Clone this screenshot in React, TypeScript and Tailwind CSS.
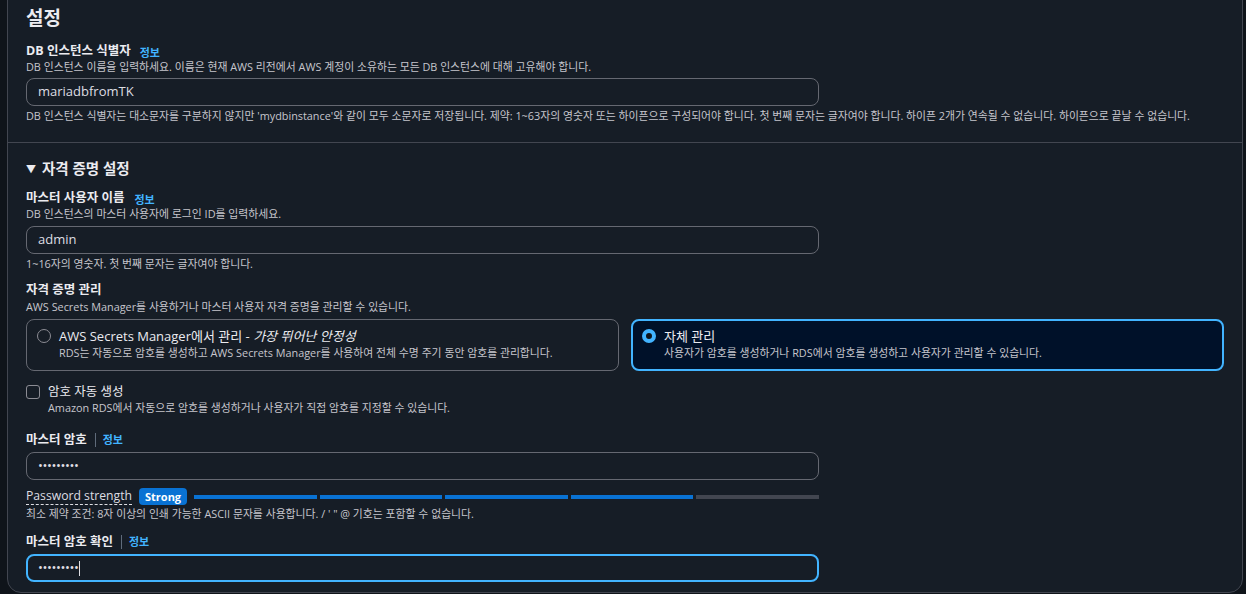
const font = {
  fontFamily: '"Open Sans", "Noto Sans CJK KR", sans-serif',
};

function InfoLink({ divider }: { divider?: boolean }) {
  return (
    <>
      {divider && <span className="ml-[8px] mr-[7px] h-[14px] w-px bg-[#5f6b7a]" />}
      <span className="text-[11px] font-bold text-[#42b4ff]">정보</span>
    </>
  );
}

function Label({
  text,
  divider,
  gap = "ml-[9px]",
}: {
  text: string;
  divider?: boolean;
  gap?: string;
}) {
  return (
    <div className="flex h-[16px] items-center">
      <span className="text-[12.5px] font-bold text-[#ebebf0]">{text}</span>
      {divider ? (
        <InfoLink divider />
      ) : (
        <span className={gap}>
          <InfoLink />
        </span>
      )}
    </div>
  );
}

function Desc({ children }: { children: React.ReactNode }) {
  return (
    <div className="text-[10.85px] leading-[16px] text-[#c6c6cd]">
      {children}
    </div>
  );
}

function Input({
  value,
  focused,
  password,
}: {
  value: string;
  focused?: boolean;
  password?: boolean;
}) {
  return (
    <div
      className={`flex h-[28px] w-[793px] items-center rounded-[8px] ${
        focused
          ? "border-2 border-[#42b4ff] px-[10px]"
          : "border border-[#656871] px-[11px]"
      }`}
    >
      <span
        className={`text-[13px] text-[#dedee3] ${password ? "tracking-[-0.4px]" : ""}`}
      >
        {value}
      </span>
      {focused && <span className="ml-px h-[15px] w-px bg-[#dedee3]" />}
    </div>
  );
}

export default function App() {
  const bars = [true, true, true, true, false];
  return (
    <div
      className="h-[594px] w-[1246px] overflow-hidden bg-[#0f141a] pl-[7px] pr-[3px]"
      style={font}
    >
      <div className="mt-[-20px] h-[613px] rounded-[14px] border border-[#424650] bg-[#161d26]">
        <div className="px-[18px] pt-[25px]">
          <h2 className="text-[19px] font-bold leading-[24px] text-[#ebebf0]">
            설정
          </h2>
          <div className="mt-[13px]">
            <Label text="DB 인스턴스 식별자" />
            <Desc>
              DB 인스턴스 이름을 입력하세요. 이름은 현재 AWS 리전에서 AWS
              계정이 소유하는 모든 DB 인스턴스에 대해 고유해야 합니다.
            </Desc>
            <div className="mt-[3px]">
              <Input value="mariadbfromTK" />
            </div>
            <div className="mt-[2px]">
              <Desc>
                DB 인스턴스 식별자는 대소문자를 구분하지 않지만
                'mydbinstance'와 같이 모두 소문자로 저장됩니다. 제약: 1~63자의
                영숫자 또는 하이픈으로 구성되어야 합니다. 첫 번째 문자는
                글자여야 합니다. 하이픈 2개가 연속될 수 없습니다. 하이픈으로
                끝날 수 없습니다.
              </Desc>
            </div>
          </div>
        </div>

        <div className="mt-[18px] border-t border-[#424650]" />

        <div className="px-[18px] pt-[15px]">
          <div className="flex items-center gap-[6px] leading-[22px]">
            <span className="text-[10px] text-[#ebebf0]">▼</span>
            <span className="text-[14.5px] font-bold text-[#ebebf0]">
              자격 증명 설정
            </span>
          </div>

          <div className="mt-[10px]">
            <Label text="마스터 사용자 이름" gap="ml-[10px]" />
            <Desc>DB 인스턴스의 마스터 사용자에 로그인 ID를 입력하세요.</Desc>
            <div className="mt-[4px]">
              <Input value="admin" />
            </div>
            <div className="mt-[2px]">
              <Desc>1~16자의 영숫자. 첫 번째 문자는 글자여야 합니다.</Desc>
            </div>
          </div>

          <div className="mt-[10px]">
            <div className="text-[12.5px] font-bold leading-[16px] text-[#ebebf0]">
              자격 증명 관리
            </div>
            <div className="mt-px">
              <Desc>
                AWS Secrets Manager를 사용하거나 마스터 사용자 자격 증명을
                관리할 수 있습니다.
              </Desc>
            </div>
            <div className="mt-[4px] flex gap-[12px]">
              <div className="flex h-[52px] flex-1 gap-[8px] rounded-[8px] border border-[#656871] px-[10px] pt-[7px]">
                <span className="mt-[2px] h-[14px] w-[14px] shrink-0 rounded-full border border-[#8c8c94]" />
                <div>
                  <div className="text-[13px] leading-[18px] text-[#ebebf0]">
                    AWS Secrets Manager에서 관리 -{" "}
                    <i>가장 뛰어난 안정성</i>
                  </div>
                  <Desc>
                    RDS는 자동으로 암호를 생성하고 AWS Secrets Manager를
                    사용하여 전체 수명 주기 동안 암호를 관리합니다.
                  </Desc>
                </div>
              </div>
              <div className="flex h-[52px] flex-1 gap-[8px] rounded-[8px] border-2 border-[#42b4ff] bg-[#001129] px-[9px] pt-[6px]">
                <span className="mt-[2px] h-[14px] w-[14px] shrink-0 rounded-full border-[4px] border-[#42b4ff] bg-[#0f141a]" />
                <div>
                  <div className="text-[13px] leading-[18px] text-[#ebebf0]">
                    자체 관리
                  </div>
                  <Desc>
                    사용자가 암호를 생성하거나 RDS에서 암호를 생성하고 사용자가
                    관리할 수 있습니다.
                  </Desc>
                </div>
              </div>
            </div>
          </div>

          <div className="mt-[13px] flex gap-[8px]">
            <span className="mt-px h-[14px] w-[14px] shrink-0 rounded-[3px] border border-[#8c8c94]" />
            <div>
              <div className="text-[12.5px] leading-[16px] text-[#ebebf0]">
                암호 자동 생성
              </div>
              <Desc>
                Amazon RDS에서 자동으로 암호를 생성하거나 사용자가 직접 암호를
                지정할 수 있습니다.
              </Desc>
            </div>
          </div>

          <div className="mt-[16px]">
            <Label text="마스터 암호" divider />
            <div className="mt-[4px]">
              <Input value="•••••••••" password />
            </div>
            <div className="mt-[8px] flex w-[793px] items-center">
              <span className="border-b border-dashed border-[#dedee3] text-[12.2px] leading-[16px] text-[#dedee3]">
                Password strength
              </span>
              <span className="ml-[7px] rounded-[4px] bg-[#0972d3] px-[6px] text-[11px] font-bold leading-[17px] text-white">
                Strong
              </span>
              <div className="ml-[7px] flex flex-1 gap-[3px]">
                {bars.map((on, i) => (
                  <span
                    key={i}
                    className={`h-[4px] flex-1 ${on ? "bg-[#0972d3]" : "bg-[#424650]"}`}
                  />
                ))}
              </div>
            </div>
            <div className="mt-px">
              <Desc>
                최소 제약 조건: 8자 이상의 인쇄 가능한 ASCII 문자를
                사용합니다. / ' " @ 기호는 포함할 수 없습니다.
              </Desc>
            </div>
          </div>

          <div className="mt-[12px]">
            <Label text="마스터 암호 확인" divider />
            <div className="mt-[4px]">
              <Input value="•••••••••" password focused />
            </div>
          </div>
        </div>
      </div>
    </div>
  );
}
